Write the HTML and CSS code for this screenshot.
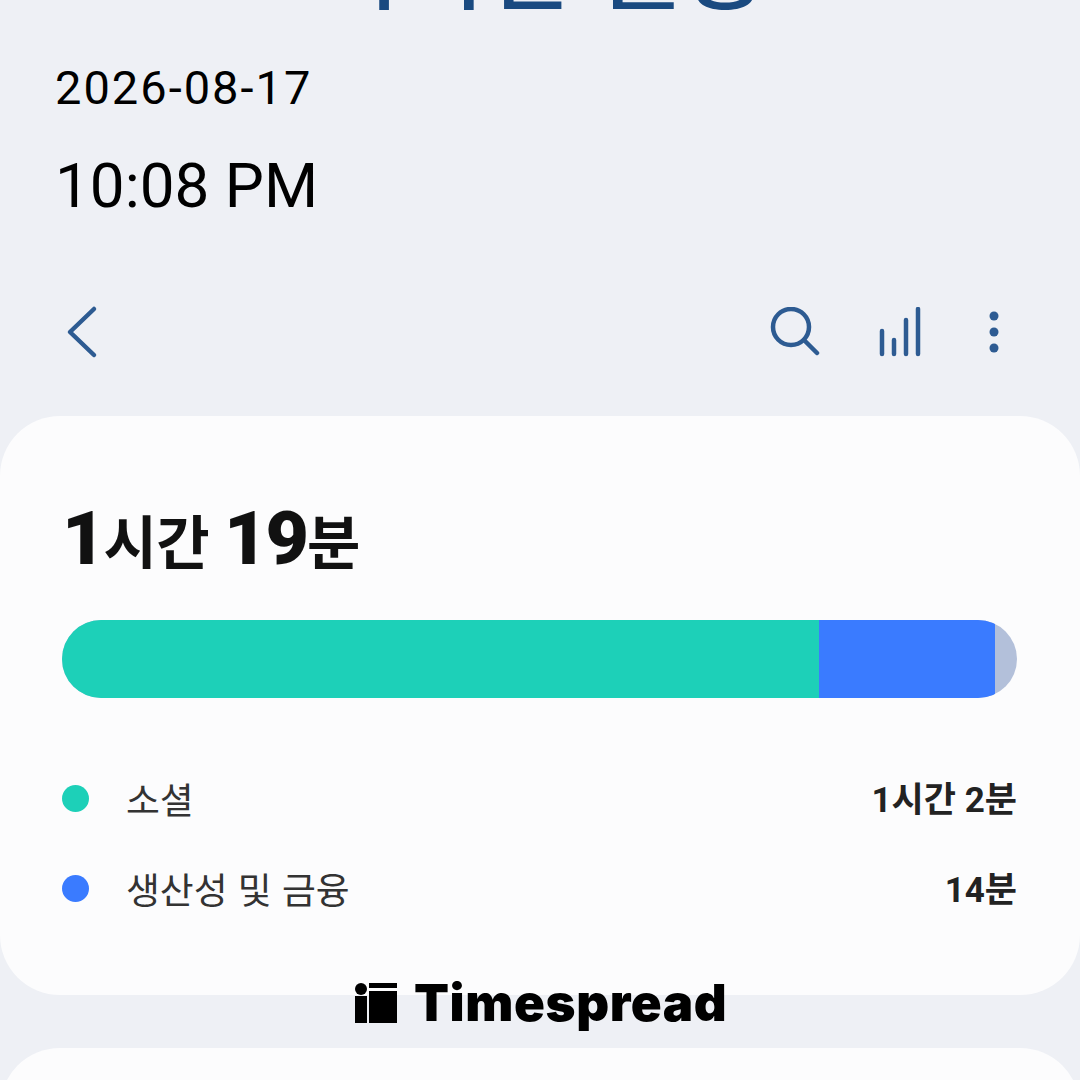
FILE: index.html
```html
<!DOCTYPE html>
<html lang="ko">
<head>
    <meta charset="UTF-8">
    <meta name="viewport" content="width=device-width, initial-scale=1.0">
    <title>디지털 웰빙</title>
    <link rel="stylesheet" href="styles.css">
</head>
<body>
    <header class="top">
        <h1 class="page-title">디지털 웰빙</h1>
        <p class="date">2026-08-17</p>
        <p class="time">10:08 PM</p>
    </header>

    <nav class="toolbar">
        <svg class="icon-back" width="34" height="54" viewBox="0 0 34 54">
            <path d="M29 4 L5 27 L29 50" />
        </svg>
        <div class="toolbar-right">
            <svg class="icon-search" width="50" height="50" viewBox="0 0 50 50">
                <circle cx="21" cy="20" r="18" />
                <path d="M34 33 L47 46" />
            </svg>
            <svg class="icon-bars" width="44" height="50" viewBox="0 0 44 50">
                <path d="M4 24 V47 M16 33 V47 M28 13 V47 M40 2 V47" />
            </svg>
            <svg class="icon-more" width="12" height="46" viewBox="0 0 12 46">
                <circle cx="6" cy="7" r="4.5" />
                <circle cx="6" cy="23" r="4.5" />
                <circle cx="6" cy="39" r="4.5" />
            </svg>
        </div>
    </nav>

    <main class="cards">
        <section class="card">
            <h2 class="total"><b>1</b>시간 <b>19</b>분</h2>
            <div class="bar">
                <div class="bar-seg bar-social"></div>
                <div class="bar-seg bar-prod"></div>
            </div>
            <ul class="legend">
                <li class="legend-row">
                    <span class="dot dot-social"></span>
                    <span class="legend-name">소셜</span>
                    <span class="legend-value">1시간 2분</span>
                </li>
                <li class="legend-row">
                    <span class="dot dot-prod"></span>
                    <span class="legend-name">생산성 및 금융</span>
                    <span class="legend-value">14분</span>
                </li>
            </ul>
        </section>
        <section class="card card-next"></section>
    </main>

    <div class="watermark">
        <svg width="42" height="40" viewBox="0 0 42 40">
            <circle cx="6" cy="6" r="6" />
            <rect x="0" y="13" width="12" height="27" />
            <rect x="14" y="0" width="28" height="5" />
            <rect x="14" y="8" width="28" height="32" />
        </svg>
        <span class="watermark-name">Timespread</span>
    </div>
</body>
</html>
```

FILE: styles.css
```css
* {
    box-sizing: border-box;
}
html, body {
    height: 1080px;
}
body {
    font-family: 'Roboto', 'Noto Sans CJK KR', sans-serif;
    margin: 0;
    padding: 0;
    overflow: hidden;
    position: relative;
    color: #000;
    background-color: #eef0f5;
}
.top {
    padding-left: 55px;
}
.page-title {
    margin: -93px 0 0 -55px;
    height: 110px;
    line-height: 110px;
    text-align: center;
    font-family: 'Noto Sans CJK KR', sans-serif;
    font-size: 92px;
    font-weight: 500;
    color: #1a4a80;
}
.date {
    margin: 44px 0 0 0;
    font-size: 47px;
    line-height: 54px;
    letter-spacing: 2px;
}
.time {
    margin: 35px 0 0 0;
    font-size: 62px;
    line-height: 72px;
}
.toolbar {
    display: flex;
    justify-content: space-between;
    align-items: center;
    margin-top: 80px;
    padding: 0 80px 0 65px;
    height: 60px;
}
.toolbar svg {
    fill: none;
    stroke: #2d5b92;
    stroke-width: 4.5;
    stroke-linecap: round;
    stroke-linejoin: round;
}
.toolbar svg.icon-more {
    fill: #2d5b92;
    stroke: none;
}
.toolbar-right {
    display: flex;
    align-items: center;
    gap: 58px;
}
.icon-bars {
    margin-right: 8px;
}
.cards {
    margin-top: 54px;
}
.card {
    background: #fcfcfd;
    border-radius: 60px;
    height: 579px;
    padding: 80px 63px 0 62px;
}
.card-next {
    margin-top: 53px;
}
.total {
    margin: 0;
    height: 84px;
    font-family: 'Noto Sans CJK KR', sans-serif;
    font-size: 58px;
    line-height: 84px;
    font-weight: 700;
    color: #111;
    letter-spacing: -0.5px;
    word-spacing: -1px;
}
.total b {
    font-family: 'Roboto', sans-serif;
    font-size: 75px;
    font-weight: 900;
    letter-spacing: -2px;
}
.bar {
    display: flex;
    height: 78px;
    margin-top: 40px;
    border-radius: 39px;
    overflow: hidden;
    background: #b3c0da;
}
.bar-seg {
    height: 100%;
}
.bar-social {
    width: 757px;
    background: #1dd0b8;
}
.bar-prod {
    width: 176px;
    background: #3a7bff;
}
.legend {
    list-style: none;
    margin: 55px 0 0 0;
    padding: 0;
}
.legend-row {
    display: flex;
    align-items: center;
    height: 90px;
}
.dot {
    width: 27px;
    height: 27px;
    border-radius: 50%;
    margin-right: 37px;
}
.dot-social {
    background: #1dd0b8;
}
.dot-prod {
    background: #3a7bff;
}
.legend-name {
    flex: 1;
    font-family: 'Noto Sans CJK KR', sans-serif;
    font-size: 36.8px;
    color: #333;
}
.legend-value {
    margin-bottom: 4px;
    font-family: 'Roboto', 'Noto Sans CJK KR', sans-serif;
    font-size: 35px;
    font-weight: 700;
    color: #222;
}
.watermark {
    position: absolute;
    left: 355px;
    top: 982px;
    display: flex;
    align-items: center;
    gap: 17px;
    color: #000;
}
.watermark svg {
    fill: #000;
}
.watermark-name {
    font-family: 'Inter', sans-serif;
    font-size: 51px;
    line-height: 41px;
    font-weight: 900;
    letter-spacing: 0.6px;
}
```
